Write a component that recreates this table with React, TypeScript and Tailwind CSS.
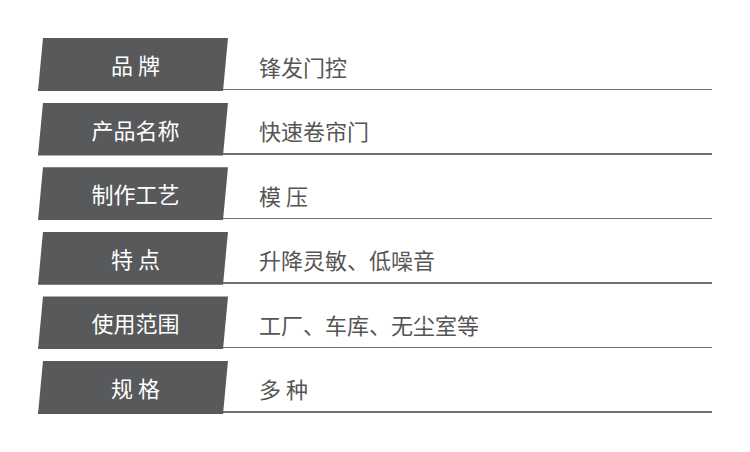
const rows = [
  { label: '品 牌', value: '锋发门控' },
  { label: '产品名称', value: '快速卷帘门' },
  { label: '制作工艺', value: '模 压' },
  { label: '特 点', value: '升降灵敏、低噪音' },
  { label: '使用范围', value: '工厂、车库、无尘室等' },
  { label: '规 格', value: '多 种' },
]

export default function App() {
  return (
    <div
      className="h-[452px] w-[750px] bg-white pl-[38px] pr-[38px] pt-[38px]"
      style={{ fontFamily: '"Noto Sans CJK SC", "Noto Sans", sans-serif' }}
    >
      <div className="flex flex-col gap-[11.6px]">
        {rows.map((row, i) => (
          <div key={i} className="relative flex h-[53px] items-stretch">
            <div className="absolute bottom-[1px] left-0 right-0 h-[1.5px] bg-[#6f6f6f]" />
            <div className="relative flex w-[190px] shrink-0 items-center justify-center bg-[#58595b] pl-[5px] text-[22px] text-white [clip-path:polygon(5px_0,100%_0,calc(100%-5px)_100%,0_100%)]">
              {row.label}
            </div>
            <div className="relative flex items-center pl-[31px] pt-[3px] text-[22px] text-[#555555]">
              {row.value}
            </div>
          </div>
        ))}
      </div>
    </div>
  )
}
